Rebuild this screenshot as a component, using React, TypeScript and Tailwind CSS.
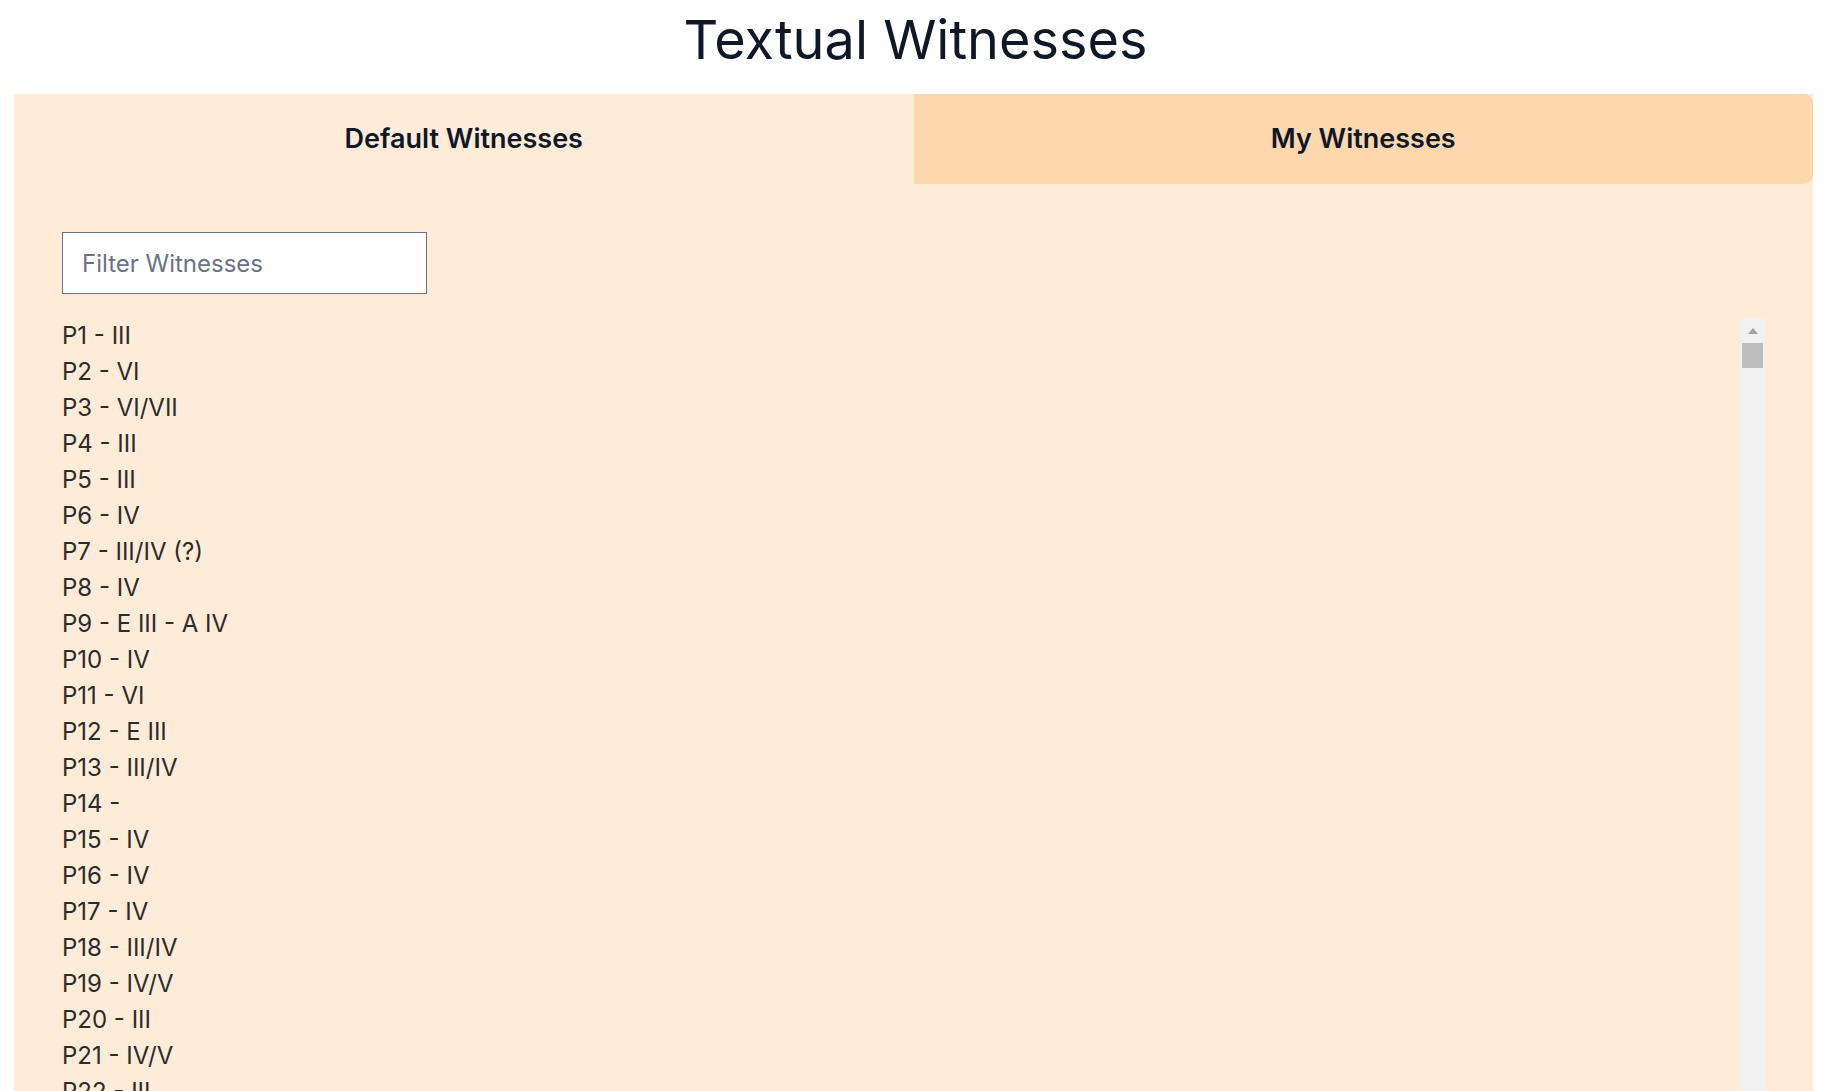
import { useState } from "react";

const witnesses = [
  "P1 - III",
  "P2 - VI",
  "P3 - VI/VII",
  "P4 - III",
  "P5 - III",
  "P6 - IV",
  "P7 - III/IV (?)",
  "P8 - IV",
  "P9 - E III - A IV",
  "P10 - IV",
  "P11 - VI",
  "P12 - E III",
  "P13 - III/IV",
  "P14 - ",
  "P15 - IV",
  "P16 - IV",
  "P17 - IV",
  "P18 - III/IV",
  "P19 - IV/V",
  "P20 - III",
  "P21 - IV/V",
  "P22 - III",
  "P23 - III",
  "P24 - IV",
  "P25 - IV",
];

export default function App() {
  const [tab, setTab] = useState<"default" | "mine">("default");
  const [filter, setFilter] = useState("");

  const shown = witnesses.filter((w) =>
    w.toLowerCase().includes(filter.toLowerCase())
  );

  return (
    <div
      className="h-screen overflow-hidden bg-white"
      style={{ fontFamily: "Inter, 'Noto Sans', sans-serif" }}
    >
      <h1 className="pt-[10px] text-center text-[54px] leading-[60px] text-gray-900">
        Textual Witnesses
      </h1>

      <div className="mt-[24px] ml-[14px] mr-[18px] bg-[#feecd8]">
        {/* tabs */}
        <div className="flex h-[90px]">
          <button
            onClick={() => setTab("default")}
            className={
              "flex-1 text-[27px] font-semibold text-gray-900 " +
              (tab === "default" ? "bg-[#feecd8]" : "bg-[#fdd7ad] rounded-l-[9px]")
            }
          >
            Default Witnesses
          </button>
          <button
            onClick={() => setTab("mine")}
            className={
              "flex-1 text-[27px] font-semibold text-gray-900 " +
              (tab === "mine" ? "bg-[#feecd8]" : "bg-[#fdd7ad] rounded-r-[9px]")
            }
          >
            My Witnesses
          </button>
        </div>

        <div className="px-[48px] pt-[48px]">
          <input
            value={filter}
            onChange={(e) => setFilter(e.target.value)}
            placeholder="Filter Witnesses"
            className="h-[62px] w-[365px] border border-gray-500 bg-white px-[19px] text-[24px] text-gray-800 placeholder:text-gray-500 outline-none"
          />

          <div className="mt-[24px] flex h-[900px]">
            <ul className="flex-1 overflow-hidden text-[24px] leading-[36px] text-[#2b2b2b]">
              {shown.map((w) => (
                <li key={w}>{w}</li>
              ))}
            </ul>

            {/* scrollbar */}
            <div className="flex w-[25px] flex-col items-center bg-[#f1f1f1]">
              <div className="flex h-[25px] w-full items-center justify-center">
                <svg width="12" height="8" viewBox="0 0 12 8">
                  <path d="M6 1 L11 7 L1 7 Z" fill="#a3a3a3" />
                </svg>
              </div>
              <div className="h-[25px] w-[21px] bg-[#bdbdbd]" />
            </div>
          </div>
        </div>
      </div>
    </div>
  );
}
